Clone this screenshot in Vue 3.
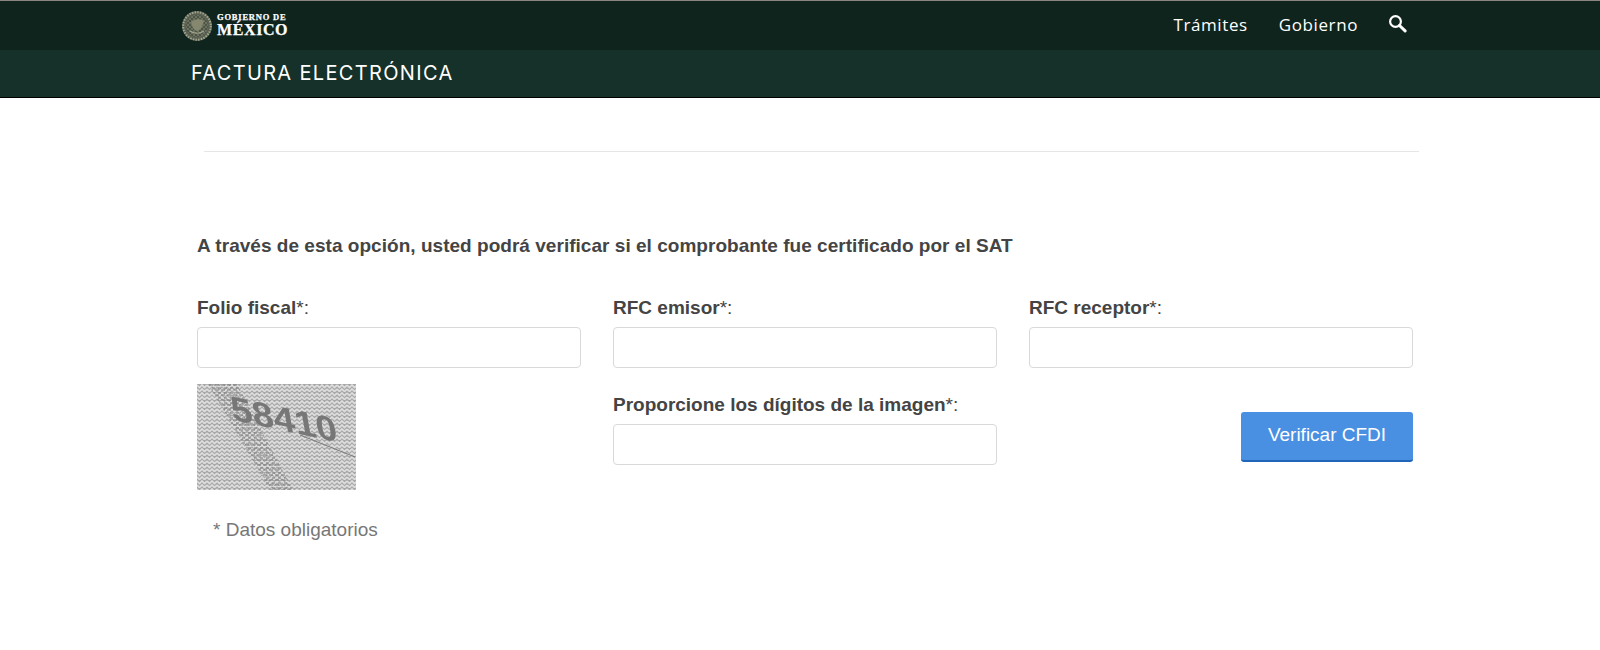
<template>
  <div class="page">
    <header class="topbar">
      <div class="topbar-inner">
        <a class="logo">
          <svg class="seal" width="32" height="32" viewBox="0 0 32 32">
            <defs>
              <pattern id="speck" width="4" height="4" patternUnits="userSpaceOnUse">
                <rect width="4" height="4" fill="#4c5446" />
                <path d="M0 1h2M2 3h2" stroke="#8d8f78" stroke-width="1" />
              </pattern>
            </defs>
            <circle cx="16" cy="16" r="15" fill="#5a6152" />
            <circle cx="16" cy="16" r="13.8" fill="none" stroke="#a3a68f" stroke-width="2" stroke-dasharray="1.5 1.2" />
            <circle cx="16" cy="16" r="11" fill="url(#speck)" />
            <path d="M10 12c3-3 9-4 13-1-1 4-3 9-7 10-4-1-5-5-6-9z" fill="#85876f" />
            <path d="M9 21c4 3 10 3 14 0" fill="none" stroke="#a3a68f" stroke-width="1.2" />
          </svg>
          <span class="logo-text">
            <span class="logo-small">GOBIERNO DE</span>
            <span class="logo-big">MÉXICO</span>
          </span>
        </a>
        <nav class="menu">
          <a>Trámites</a>
          <a>Gobierno</a>
          <svg class="search" width="19" height="19" viewBox="0 0 19 19">
            <circle cx="7.5" cy="7.5" r="5.4" fill="none" stroke="#fff" stroke-width="2.2" />
            <path d="M11.5 11.5l5.6 5.4" stroke="#fff" stroke-width="3" stroke-linecap="round" />
          </svg>
        </nav>
      </div>
    </header>
    <div class="subbar">
      <div class="subbar-inner">FACTURA ELECTRÓNICA</div>
    </div>

    <main class="content">
      <hr class="rule" />
      <p class="intro">A través de esta opción, usted podrá verificar si el comprobante fue certificado por el SAT</p>

      <div class="grid">
        <div class="field" v-for="f in fields" :key="f">
          <label><b>{{ f }}</b>*:</label>
          <input type="text" />
        </div>
      </div>

      <div class="grid second">
        <div class="captcha-col">
          <svg class="captcha" width="159" height="106" viewBox="0 0 159 106">
            <defs>
              <pattern id="weave" width="10" height="8" patternUnits="userSpaceOnUse">
                <rect width="10" height="8" fill="#a8a8a8" />
                <path d="M0 1l2.5 2.5L5 1l2.5 2.5L10 1M0 5l2.5 2.5L5 5l2.5 2.5L10 5" fill="none" stroke="#dedede" stroke-width="1.7" />
              </pattern>
              <pattern id="band" width="6" height="5" patternUnits="userSpaceOnUse">
                <path d="M0 1h4M3 4h3" stroke="#6f6f6f" stroke-width="1.6" opacity=".6" />
              </pattern>
            </defs>
            <rect width="159" height="106" fill="url(#weave)" />
            <path d="M11 0H40L96 106H73z" fill="url(#band)" />
            <path d="M103 51l55 22" stroke="#7b7b7b" stroke-width="1" />
            <text class="captcha-text" transform="translate(36 36) rotate(12) skewX(22) scale(1.3 1.1)">58410</text>
          </svg>
        </div>
        <div class="field digits">
          <label><b>Proporcione los dígitos de la imagen</b>*:</label>
          <input type="text" />
        </div>
        <div class="action">
          <button type="button">Verificar CFDI</button>
        </div>
      </div>

      <p class="note">* Datos obligatorios</p>
    </main>
  </div>
</template>

<script setup>
const fields = ["Folio fiscal", "RFC emisor", "RFC receptor"];
</script>

<style>
html,
body {
  margin: 0;
  background: #fff;
}
</style>

<style scoped>
.page {
  font-family: "Liberation Sans", Arial, sans-serif;
  color: #444;
}

.topbar {
  height: 49px;
  background: #0f241d;
  border-top: 1px solid #8a8580;
}

.topbar-inner {
  height: 49px;
  padding: 0 193px 0 181px;
  display: flex;
  align-items: center;
  justify-content: space-between;
}

.logo {
  display: flex;
  align-items: center;
  gap: 4px;
}

.logo-text {
  display: flex;
  flex-direction: column;
  font-family: "Liberation Serif", serif;
  font-weight: 700;
  color: #fff;
  -webkit-text-stroke: 0.25px #fff;
}

.logo-small {
  font-size: 8.5px;
  line-height: 9px;
  letter-spacing: 0.8px;
}

.logo-big {
  font-size: 16px;
  line-height: 16px;
  letter-spacing: 0.6px;
}

.menu {
  display: flex;
  align-items: center;
  margin-top: -2px;
  font-family: "Open Sans", sans-serif;
  font-size: 17px;
  letter-spacing: 0.6px;
  color: #fff;
}

.menu a {
  margin-right: 31px;
}

.menu a + a {
  margin-right: 30px;
}

.search {
  margin-top: -3px;
}

.subbar {
  height: 47px;
  background: #163129;
  border-bottom: 1px solid #000;
}

.subbar-inner {
  padding-left: 191px;
  line-height: 46px;
  font-family: "Inter", "Open Sans", sans-serif;
  font-size: 20px;
  letter-spacing: 1.33px;
  color: #fff;
}

.content {
  padding: 0 171px 0 181px;
}

.rule {
  margin: 53px 10px 0 23px;
  border: none;
  border-top: 1px solid #e6e6e6;
}

.intro {
  margin: 84px 16px 0;
  font-size: 19px;
  line-height: 20px;
  font-weight: 700;
  letter-spacing: 0.03px;
}

.grid {
  display: grid;
  grid-template-columns: repeat(3, 1fr);
  margin-top: 42px;
}

.second {
  margin-top: 16px;
}

.field {
  padding: 0 16px;
}

.field label {
  display: block;
  font-size: 19px;
  line-height: 20px;
  margin-bottom: 9px;
}

.field input {
  display: block;
  box-sizing: border-box;
  width: 100%;
  height: 41px;
  border: 1px solid #d9d9d9;
  border-radius: 4px;
  background: #fff;
}

.digits {
  padding-top: 11px;
}

.captcha-col {
  padding: 0 16px;
  height: 106px;
}

.captcha {
  display: block;
  filter: blur(0.4px);
}

.captcha-text {
  font-family: "Liberation Sans", sans-serif;
  font-size: 30px;
  font-weight: 700;
  fill: #777;
}

.action {
  padding: 28px 16px 0;
  display: flex;
  justify-content: flex-end;
  align-items: flex-start;
}

.action button {
  width: 172px;
  height: 50px;
  padding: 0 0 2px;
  border: none;
  border-bottom: 2px solid #1f65b8;
  border-radius: 3px;
  background: #4a90e2;
  color: #fff;
  font-family: "Liberation Sans", sans-serif;
  font-size: 19px;
}

.note {
  margin: 30px 32px 0;
  font-size: 19px;
  line-height: 20px;
  color: #777;
}
</style>
